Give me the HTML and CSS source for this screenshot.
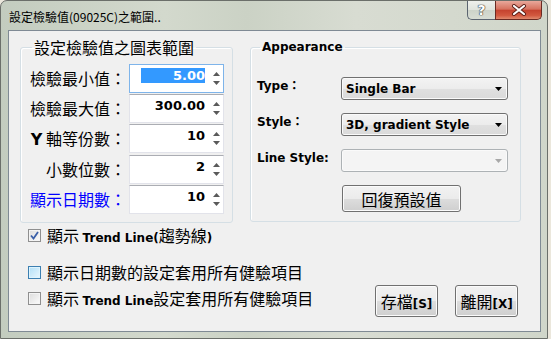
FILE: index.html
```html
<!DOCTYPE html>
<html lang="zh-Hant">
<head>
    <meta charset="UTF-8">
    <title>設定檢驗值(09025C)之範圍..</title>
    <link rel="stylesheet" href="styles.css">
</head>
<body>
    <div class="window">
        <div class="titlebar">
            <span class="title">設定檢驗值(09025C)之範圍..</span>
            <div class="caption-buttons">
                <span class="cap-btn help">?</span>
                <span class="cap-btn close">
                    <svg width="16" height="12" viewBox="0 0 16 12">
                        <path d="M3 2 L13 10 M13 2 L3 10" stroke="#5a1e16" stroke-width="4" stroke-linecap="round"/>
                        <path d="M3 2 L13 10 M13 2 L3 10" stroke="#fff" stroke-width="2.2" stroke-linecap="round"/>
                    </svg>
                </span>
            </div>
        </div>

        <div class="client">
            <div class="groups">
                <fieldset class="group range">
                    <legend>設定檢驗值之圖表範圍</legend>
                    <div class="field-grid">
                        <label>檢驗最小值：</label>
                        <div class="spin focused"><span class="value"><span class="selected">5.00</span></span><span class="spin-btns"><svg width="7" height="4"><polygon points="0,4 3.5,0 7,4"/></svg><svg width="7" height="4"><polygon points="0,0 7,0 3.5,4"/></svg></span></div>

                        <label>檢驗最大值：</label>
                        <div class="spin"><span class="value">300.00</span><span class="spin-btns"><svg width="7" height="4"><polygon points="0,4 3.5,0 7,4"/></svg><svg width="7" height="4"><polygon points="0,0 7,0 3.5,4"/></svg></span></div>

                        <label><b class="latin">Y</b> 軸等份數：</label>
                        <div class="spin"><span class="value">10</span><span class="spin-btns"><svg width="7" height="4"><polygon points="0,4 3.5,0 7,4"/></svg><svg width="7" height="4"><polygon points="0,0 7,0 3.5,4"/></svg></span></div>

                        <label>小數位數：</label>
                        <div class="spin"><span class="value">2</span><span class="spin-btns"><svg width="7" height="4"><polygon points="0,4 3.5,0 7,4"/></svg><svg width="7" height="4"><polygon points="0,0 7,0 3.5,4"/></svg></span></div>

                        <label class="blue">顯示日期數：</label>
                        <div class="spin"><span class="value">10</span><span class="spin-btns"><svg width="7" height="4"><polygon points="0,4 3.5,0 7,4"/></svg><svg width="7" height="4"><polygon points="0,0 7,0 3.5,4"/></svg></span></div>
                    </div>
                </fieldset>

                <fieldset class="group appearance">
                    <legend>Appearance</legend>
                    <div class="form-grid">
                        <label>Type：</label>
                        <div class="select"><span>Single Bar</span><svg width="7" height="4"><polygon points="0,0 7,0 3.5,4"/></svg></div>

                        <label>Style：</label>
                        <div class="select"><span>3D, gradient Style</span><svg width="7" height="4"><polygon points="0,0 7,0 3.5,4"/></svg></div>

                        <label>Line Style:</label>
                        <div class="select disabled"><span></span><svg width="7" height="4"><polygon points="0,0 7,0 3.5,4"/></svg></div>

                        <span></span>
                        <button class="btn reset">回復預設值</button>
                    </div>
                </fieldset>
            </div>

            <div class="check-row first">
                <span class="checkbox checked">
                    <svg width="9" height="9" viewBox="0 0 9 9"><path d="M1 4.5 L3.5 7.5 L8 1" fill="none" stroke="#3a5fa8" stroke-width="1.8"/></svg>
                </span>
                <span class="check-text">顯示 <b class="latin">Trend Line(</b>趨勢線<b class="latin">)</b></span>
            </div>

            <div class="bottom">
                <div class="checks">
                    <div class="check-row">
                        <span class="checkbox hover"></span>
                        <span class="check-text">顯示日期數的設定套用所有健驗項目</span>
                    </div>
                    <div class="check-row">
                        <span class="checkbox"></span>
                        <span class="check-text">顯示 <b class="latin">Trend Line</b>設定套用所有健驗項目</span>
                    </div>
                </div>
                <div class="actions">
                    <button class="btn">存檔<b class="latin">[S]</b></button>
                    <button class="btn">離開<b class="latin">[X]</b></button>
                </div>
            </div>
        </div>
    </div>
</body>
</html>
```

FILE: styles.css
```css
body {
    margin: 0;
    background: #ebe7dc;
    font-family: "Noto Sans CJK TC", sans-serif;
}
.latin {
    font-family: "DejaVu Sans", "Noto Sans CJK TC", sans-serif;
    font-weight: bold;
}

/* window frame */
.window {
    width: 548px;
    height: 339px;
    box-sizing: border-box;
    padding: 0 6px 6px 7px;
    border: 1px solid #6b6f6a;
    border-radius: 7px 7px 0 0;
    background: linear-gradient(to right, #c3ccbf 0%, #d3d9cd 30%, #cbd2c5 45%, #d8dcd2 65%, #d0d6ca 100%);
    display: flex;
    flex-direction: column;
}
.titlebar {
    height: 29px;
    display: flex;
    align-items: flex-start;
}
.title {
    font-size: 12px;
    line-height: 12px;
    margin-top: 10px;
    margin-left: 1px;
    color: #000;
}
.caption-buttons {
    margin-left: auto;
    margin-right: -1px;
    display: flex;
}
.cap-btn {
    height: 19px;
    box-sizing: border-box;
    border: 1px solid #5b6470;
    border-top: none;
    display: flex;
    align-items: center;
    justify-content: center;
}
.help {
    width: 28px;
    border-radius: 0 0 0 5px;
    border-right: none;
    background: linear-gradient(#eef0ec, #dfe3dc 50%, #cdd3c9 51%, #d8ddd4);
    font: bold 14px "DejaVu Sans", sans-serif;
    color: #fff;
    text-shadow: 0 0 1px #333, 0 0 1px #333, 0 0 1px #333;
}
.close {
    width: 47px;
    border-radius: 0 0 5px 0;
    border-color: #6a2a22;
    background: linear-gradient(#e9a89b, #d6725f 45%, #c5432f 52%, #d2583f 80%, #e08a6e);
}

/* client area */
.client {
    flex: 1;
    background: #f0f0f0;
    border: 1px solid #7f8a94;
    padding-top: 6px;
}
.groups {
    display: flex;
    align-items: flex-start;
}
.group {
    margin: 0;
    padding: 0;
    border: 1px solid #d5dfe5;
    border-radius: 3px;
    box-shadow: inset 1px 1px #fff;
    min-width: 0;
}
.range {
    width: 213px;
    box-sizing: border-box;
    margin-left: 11px;
    padding: 0 8px 8px 0;
}
.range legend {
    margin-left: 11px;
    padding: 0 2px;
    font-size: 16px;
    line-height: 20px;
    color: #000;
}
.appearance {
    width: 271px;
    box-sizing: border-box;
    margin-left: 17px;
    padding: 0 0 9px 6px;
}
.appearance legend {
    margin-left: 3px;
    padding: 0 2px;
    font: bold 12px/20px "DejaVu Sans", sans-serif;
}

/* numeric fields */
.field-grid {
    display: grid;
    grid-template-columns: 105px 95px;
    column-gap: 3px;
    row-gap: 1px;
    margin-top: 7px;
}
.field-grid label {
    text-align: right;
    font-size: 16px;
    line-height: 29px;
    white-space: nowrap;
}
.blue {
    color: #0000ff;
}
.spin {
    height: 29px;
    box-sizing: border-box;
    display: flex;
    background: #fff;
    border: 1px solid #e2e3ea;
    border-top-color: #abadb3;
}
.spin.focused {
    border-color: #7eb4ea;
}
.value {
    flex: 1;
    text-align: right;
    font: bold 13px/15px "DejaVu Sans", sans-serif;
    padding: 3px 4px 0 0;
}
.selected {
    display: inline-block;
    background: #3399ff;
    color: #fff;
    width: 64px;
}
.spin-btns {
    width: 14px;
    display: flex;
    flex-direction: column;
    justify-content: space-around;
    align-items: center;
    padding: 4px 0;
}
.spin-btns svg {
    fill: #5a5a5a;
}

/* appearance form */
.form-grid {
    display: grid;
    grid-template-columns: 84px 167px;
    row-gap: 13px;
    margin-top: 20px;
}
.form-grid label {
    font: bold 12px/18px "DejaVu Sans", "Noto Sans CJK TC", sans-serif;
    white-space: nowrap;
}
.select {
    height: 23px;
    box-sizing: border-box;
    border: 1px solid #707070;
    border-radius: 3px;
    background: linear-gradient(#f3f3f3, #ececec 50%, #e0e0e0 51%, #dadada);
    box-shadow: inset 0 0 0 1px #fafafa;
    display: flex;
    align-items: center;
    padding: 0 5px 0 4px;
    font: bold 12px "DejaVu Sans", sans-serif;
}
.select span {
    flex: 1;
}
.select svg {
    fill: #000;
}
.select.disabled {
    border-color: #adb2b5;
    background: #f4f4f4;
}
.select.disabled svg {
    fill: #a8a8a8;
}

.btn {
    height: 27px;
    padding: 0;
    border: 1px solid #707070;
    border-radius: 3px;
    background: linear-gradient(#f2f2f2, #ebebeb 50%, #dddddd 51%, #cfcfcf);
    box-shadow: inset 0 0 0 1px #fbfbfb;
    font-family: "Noto Sans CJK TC", sans-serif;
    font-size: 16px;
    color: #000;
}
.reset {
    width: 119px;
    margin-left: 1px;
}
.btn .latin {
    font-size: 12px;
}

/* checkboxes */
.check-row {
    display: flex;
    align-items: center;
    height: 16px;
    margin-left: 19px;
}
.check-row.first {
    margin-top: 4px;
}
.checkbox {
    width: 13px;
    height: 13px;
    box-sizing: border-box;
    border: 1px solid #8f8f8f;
    background: linear-gradient(135deg, #dcdcdc, #fbfbfb);
    box-shadow: inset 0 0 0 1px #f4f4f4;
    display: flex;
    align-items: center;
    justify-content: center;
}
.checkbox.hover {
    border-color: #3c7fb1;
    background: linear-gradient(135deg, #b1dff7, #e9f7fe);
    box-shadow: inset 0 0 0 1px #def4fe;
}
.check-text {
    margin-left: 6px;
    font-size: 16px;
    white-space: nowrap;
}
.check-text .latin {
    font-size: 12px;
}

.bottom {
    display: flex;
    align-items: flex-end;
    margin-top: 21px;
}
.checks {
    display: flex;
    flex-direction: column;
    gap: 10px;
    margin-bottom: 11px;
}
.actions {
    margin-left: auto;
    margin-right: 22px;
    display: flex;
    gap: 17px;
}
.actions .btn {
    width: 63px;
    height: 32px;
}
```
